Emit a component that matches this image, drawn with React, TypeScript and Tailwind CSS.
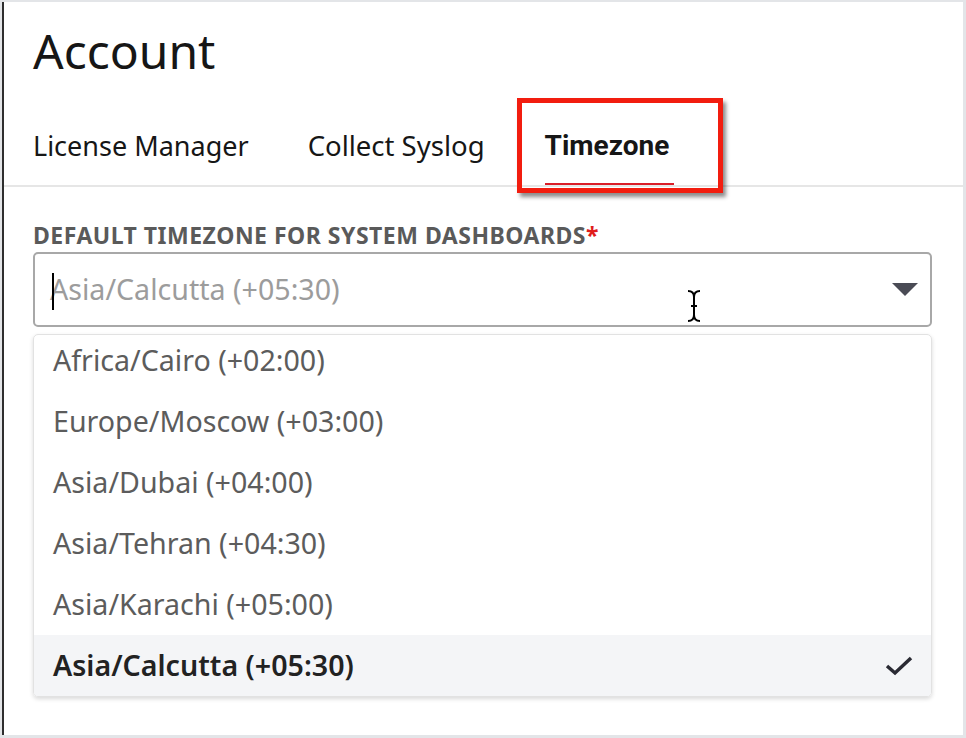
import React from "react";

const items = [
  "Africa/Cairo (+02:00)",
  "Europe/Moscow (+03:00)",
  "Asia/Dubai (+04:00)",
  "Asia/Tehran (+04:30)",
  "Asia/Karachi (+05:00)",
  "Asia/Calcutta (+05:30)",
];

export default function App() {
  return (
    <div className="w-[966px] h-[738px] bg-[#e3e5e8] pt-[2px] pr-[3px] pb-[3px] pl-[2px] overflow-hidden" style={{ fontFamily: '"Noto Sans", "Open Sans", sans-serif' }}>
      <div className="relative w-full h-full bg-white border-l-2 border-[#2e2e2e] flex flex-col">
        <div className="pl-[29px] pt-[19px]">
          <h1 className="text-[48px] leading-[60px] text-[#161616]">Account</h1>
        </div>
        <div className="mt-[47px] pl-[29px] flex border-b-2 border-[#e6e6e6]">
          <div className="text-[27px] leading-[36px] text-[#161616] pb-[21px]">License Manager</div>
          <div className="ml-[59px] text-[27.5px] leading-[36px] text-[#161616] pb-[21px]">Collect Syslog</div>
          <div className="ml-[60px] pr-[5px] text-[28px] leading-[36px] text-[#161616] font-bold pb-[19px] border-b-2 border-[#da1e28]" style={{ fontFamily: 'Roboto, "Liberation Sans", sans-serif' }}>Timezone</div>
        </div>
        <div className="absolute left-[513px] top-[96px] w-[206px] h-[95px] border-[5px] border-[#f21d0f] shadow-[3px_4px_4px_rgba(0,0,0,0.45)]"></div>

        <div className="pl-[29px] pr-[31px] pt-[34px]">
          <div className="text-[23px] leading-[28px] font-bold text-[#5a5a5a] tracking-[0.5px]">
            DEFAULT TIMEZONE FOR SYSTEM DASHBOARDS<span className="text-[#e01c1c]">*</span>
          </div>
          <div className="relative mt-[3px] h-[75px] border-2 border-[#a8a8a8] rounded-[5px] flex items-center pl-[15px] pr-[12px]">
            <span className="absolute left-[17px] top-[19px] w-[2px] h-[37px] bg-black"></span>
            <span className="text-[28.6px] text-[#9c9c9c] flex-1">Asia/Calcutta (+05:30)</span>
            <svg width="26" height="13" viewBox="0 0 26 13">
              <polygon points="0,0 26,0 13,13" fill="#4a4b55" />
            </svg>
            <svg className="absolute left-[651px] top-[35px]" width="16" height="34" viewBox="0 0 16 34">
              <path d="M2 2 Q8 2 8 8 Q8 2 14 2" fill="none" stroke="#000" strokeWidth="2" />
              <path d="M8 7 V27" stroke="#000" strokeWidth="2" />
              <path d="M5 17 H11" stroke="#000" strokeWidth="2" />
              <path d="M2 32 Q8 32 8 26 Q8 32 14 32" fill="none" stroke="#000" strokeWidth="2" />
            </svg>
          </div>
          <div className="mt-[7px] h-[363px] border border-[#e2e2e2] rounded-[5px] shadow-[0_2px_4px_rgba(0,0,0,0.15)] overflow-hidden flex flex-col justify-end">
            {items.map((it, i) => {
              const sel = i === items.length - 1;
              return (
                <div key={it} className={`shrink-0 h-[61px] flex items-center pl-[19px] pr-[18px] ${sel ? "bg-[#f4f5f7]" : ""}`}>
                  <span className={`flex-1 text-[28.6px] ${sel ? "font-semibold text-[#222]" : "text-[#5c5c5c]"}`}>{it}</span>
                  {sel && (
                    <svg width="28" height="20" viewBox="0 0 28 20">
                      <path d="M2 10 L10 17 L26 2" fill="none" stroke="#2a2a33" strokeWidth="3.5" />
                    </svg>
                  )}
                </div>
              );
            })}
          </div>
        </div>
      </div>
    </div>
  );
}
